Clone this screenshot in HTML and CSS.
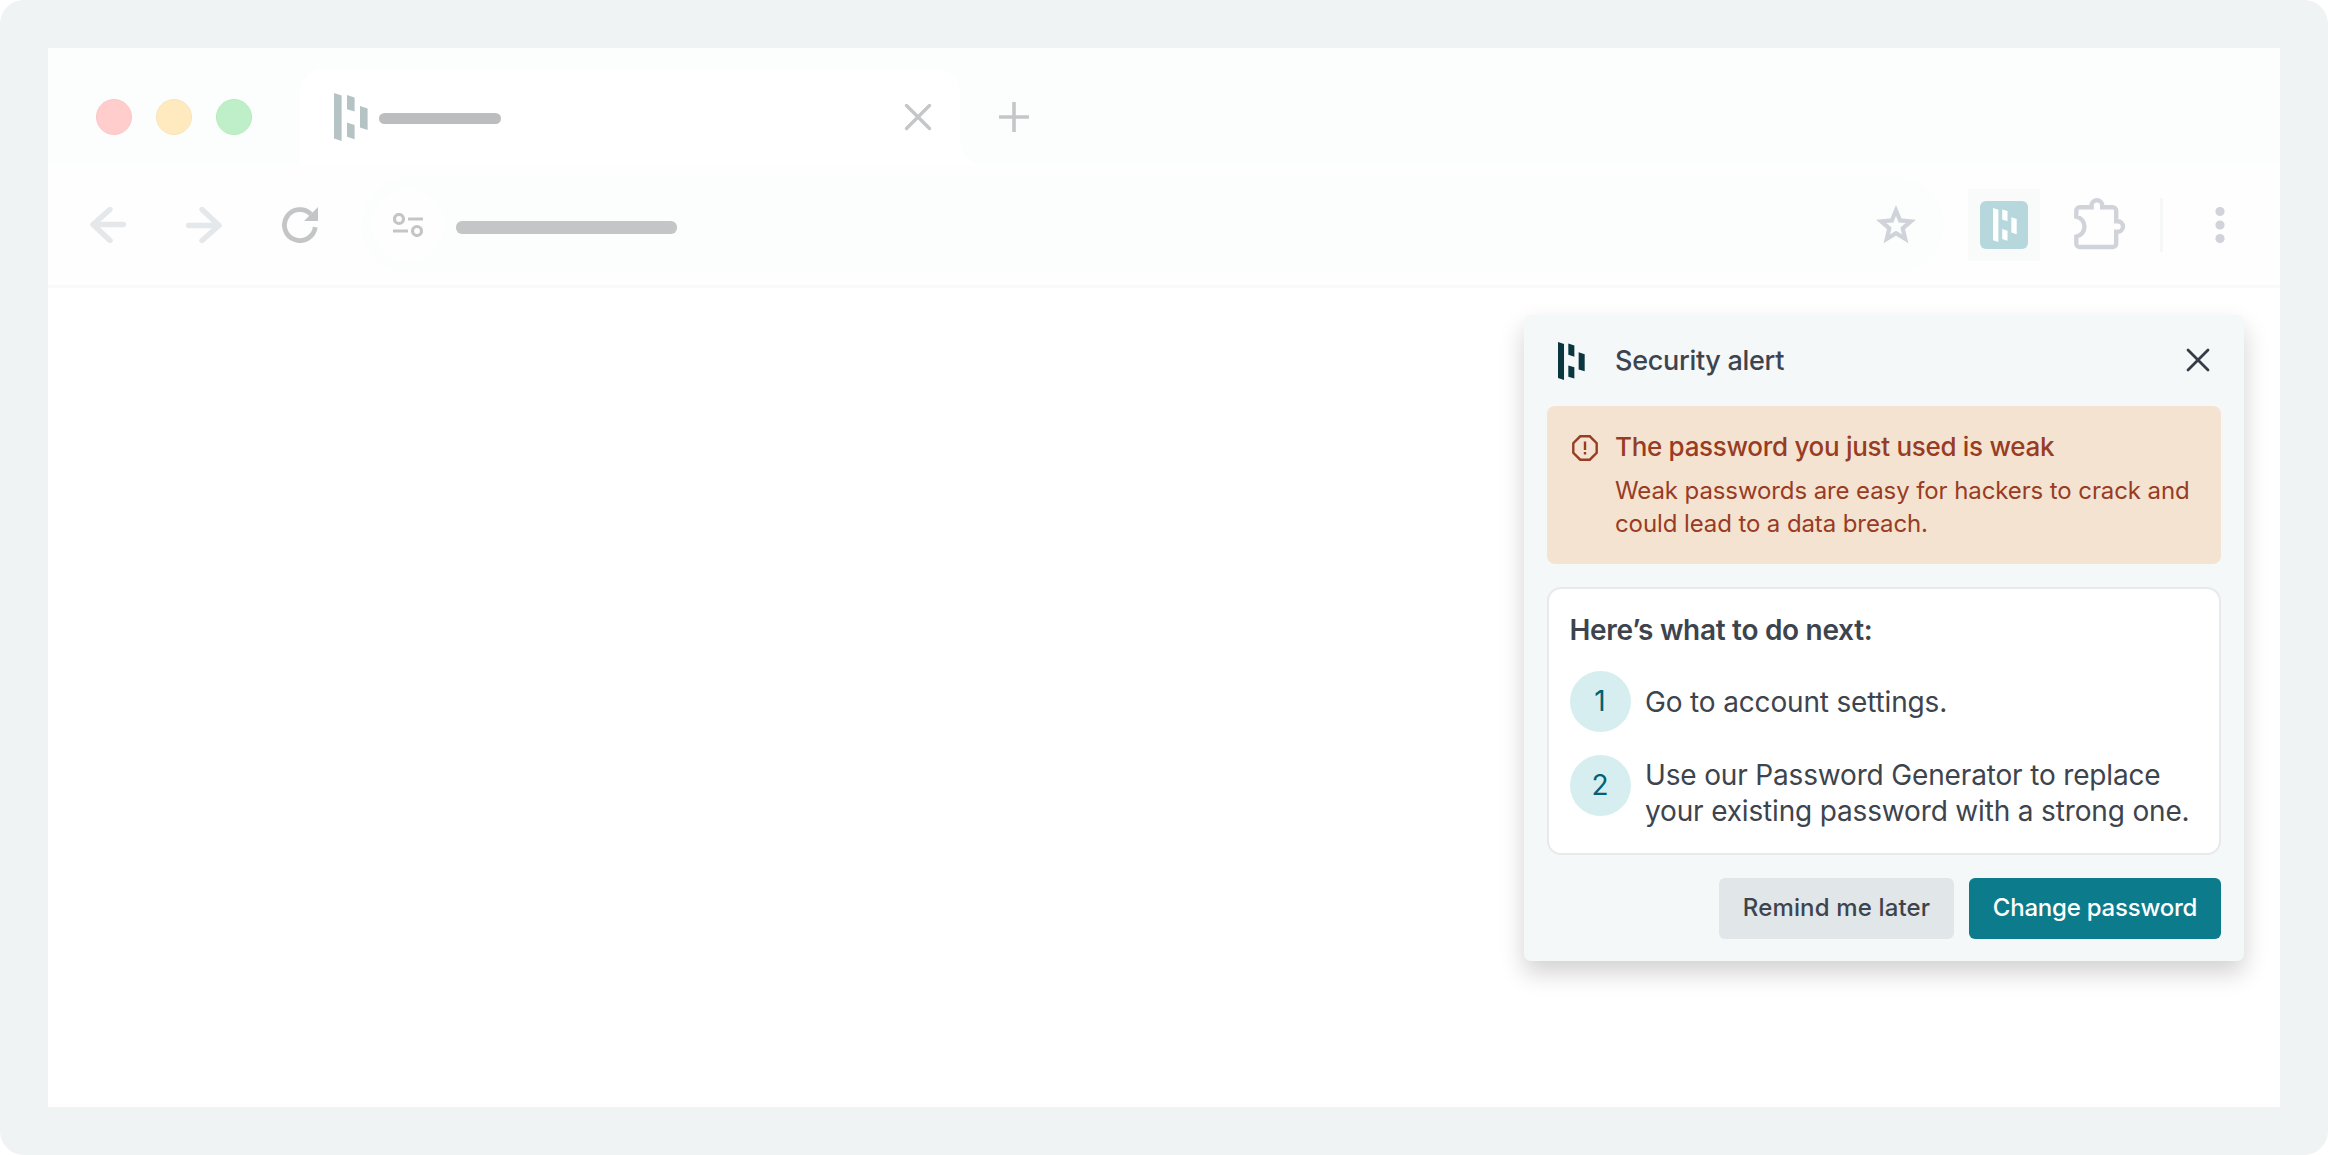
FILE: index.html
```html
<!DOCTYPE html>
<html lang="en">
<head>
<meta charset="utf-8">
<title>Security alert</title>
<link rel="stylesheet" href="styles.css">
</head>
<body>
<svg width="0" height="0" class="defs">
  <symbol id="logo" viewBox="0 0 34 48" preserveAspectRatio="none">
    <path d="M0 0L7.6 2.4V48L0 45.6ZM13 2L20.6 4.4V18.6L13 16.2ZM13 29.6L20.6 32V46.2L13 43.8ZM26 13L33.6 15.4V37L26 34.6Z"/>
  </symbol>
</svg>
<div class="frame">
  <div class="window">
    <div class="tabstrip">
      <div class="lights"><i class="light red"></i><i class="light yellow"></i><i class="light green"></i></div>
      <div class="tab">
        <svg class="tab-logo"><use href="#logo"/></svg>
        <span class="tab-title"></span>
        <svg class="tab-close" viewBox="0 0 28 28"><path d="M2.5 2.5L25.5 25.5M25.5 2.5L2.5 25.5"/></svg>
      </div>
      <svg class="tab-new" viewBox="0 0 30 30"><path d="M15 0V30M0 15H30"/></svg>
    </div>
    <div class="toolbar">
      <div class="nav">
        <svg class="arrow" viewBox="0 0 36 36"><path d="M33.5 17.5H3M20 2.5L3 17.5L20 33.5"/></svg>
        <svg class="arrow" viewBox="0 0 36 36"><path d="M2.5 18.5H33M16 2.5L33 18.5L16 33.5"/></svg>
        <svg class="reload" viewBox="0 0 36 36"><path d="M33.3 20.2A15.5 15.5 0 1 1 29 7.2" fill="none" stroke="#c4c5c7" stroke-width="4.8"/><path d="M36 0V14H22Z" fill="#c4c5c7"/></svg>
      </div>
      <div class="address">
        <div class="site-info">
          <svg class="tune" viewBox="0 0 30 24"><circle cx="6" cy="6" r="4.5"/><circle cx="24" cy="18" r="4.5"/><path d="M15 6H30M0 18H15"/></svg>
        </div>
        <span class="url"></span>
        <svg class="star" viewBox="0 0 40 40"><path d="M20 5.5L24.1 15.4L34.8 16.3L26.7 23.3L29.2 33.8L20 28.2L10.8 33.8L13.3 23.3L5.2 16.3L15.9 15.4Z"/></svg>
      </div>
      <div class="extension"><div class="tile"><svg class="tile-logo"><use href="#logo"/></svg></div></div>
      <svg class="puzzle" viewBox="0 0 52 52"><path d="M6 9.2H17.6V7.5A5.3 5.3 0 0 1 28.2 7.5V9.2H38.5A3.5 3.5 0 0 1 42.2 12.9V23.2H43.7A5.3 5.3 0 0 1 43.7 33.8H42.2V45.3A3.5 3.5 0 0 1 38.5 49H6A3.5 3.5 0 0 1 2.3 45.3V38.6A10.2 10.2 0 0 0 2.3 18.6V12.9A3.5 3.5 0 0 1 6 9.2Z"/></svg>
      <span class="divider"></span>
      <svg class="dots" viewBox="0 0 10 36"><circle cx="5" cy="4.5" r="4.6"/><circle cx="5" cy="18" r="4.6"/><circle cx="5" cy="31.5" r="4.6"/></svg>
    </div>
    <div class="page">
      <section class="popup">
        <header class="popup-header">
          <svg class="popup-logo"><use href="#logo"/></svg>
          <h1 class="popup-title">Security alert</h1>
          <svg class="popup-close" viewBox="0 0 24 24"><path d="M2 2L22 22M22 2L2 22"/></svg>
        </header>
        <div class="alert">
          <svg class="alert-icon" viewBox="0 0 26 26"><path d="M8.2 1.3H17.8L24.7 8.2V17.8L17.8 24.7H8.2L1.3 17.8V8.2Z" fill="none" stroke="#983c24" stroke-width="2.4"/><path d="M11.8 6.5H14.2V15H11.8ZM11.8 17H14.2V19.5H11.8Z" fill="#983c24"/></svg>
          <div>
            <h2 class="alert-title">The password you just used is weak</h2>
            <p class="alert-text">Weak passwords are easy for hackers to crack and<br>could lead to a data breach.</p>
          </div>
        </div>
        <div class="card">
          <h2 class="card-title">Here’s what to do next:</h2>
          <div class="step"><b class="num">1</b><p class="step-text">Go to account settings.</p></div>
          <div class="step"><b class="num">2</b><p class="step-text">Use our Password Generator to replace<br>your existing password with a strong one.</p></div>
        </div>
        <div class="actions">
          <button class="btn later">Remind me later</button>
          <button class="btn change">Change password</button>
        </div>
      </section>
    </div>
  </div>
</div>
</body>
</html>
```
FILE: styles.css
```css
* { box-sizing: border-box; }
body { margin: 0; background: #fff; font-family: Inter, "Liberation Sans", sans-serif; color: #3d444d; }
h1, h2, p { margin: 0; font-weight: 400; white-space: nowrap; }
svg { display: block; flex: none; }
.defs { position: absolute; }
.frame { width: 2328px; height: 1155px; padding: 48px; border-radius: 24px; background: #eff3f4; }
.window { height: 1059px; background: #fff; display: flex; flex-direction: column; }

.tabstrip { height: 117px; background: #fcfefd; display: flex; padding: 21px 0 0 48px; }
.lights { display: flex; gap: 24px; padding-top: 30px; width: 204px; }
.light { width: 36px; height: 36px; border-radius: 50%; border: 1.5px solid; }
.red { background: #ffcdcc; border-color: #fac7c6; }
.yellow { background: #ffeabf; border-color: #f8e4ba; }
.green { background: #bfefc8; border-color: #b8e9c0; }
.tab { position: relative; width: 660px; height: 96px; background: #fff; border-radius: 24px 24px 0 0; display: flex; align-items: center; padding: 0 28px 0 33.5px; }
.tab::after { content: ""; position: absolute; left: 100%; bottom: 0; width: 24px; height: 24px; background: radial-gradient(circle at 100% 0, transparent 23.5px, #fff 24px); }
.tab-logo { width: 34px; height: 48px; fill: #b5c3c4; }
.tab-title { width: 122px; height: 10.5px; border-radius: 6px; background: #bcbdbf; margin: 3px auto 0 11.5px; }
.tab-close { width: 28px; height: 28px; fill: none; stroke: #c5c6c8; stroke-width: 3.4; stroke-linecap: round; }
.tab-new { width: 30px; height: 30px; margin: 33px 0 0 39px; fill: none; stroke: #c5c6c8; stroke-width: 3.6; }

.toolbar { height: 123px; background: #fefefe; border-bottom: 3px solid #f8f9f9; display: flex; align-items: center; padding-left: 42px; }
.nav { display: flex; gap: 60px; width: 271px; }
.arrow { width: 36px; height: 36px; fill: none; stroke: #e4e8eb; stroke-width: 5.4; stroke-linecap: round; stroke-linejoin: round; }
.reload { width: 36px; height: 36px; }
.address { width: 1583px; height: 96px; border-radius: 48px; background: #fbfefd; display: flex; align-items: center; padding: 0 28px 0 11px; }
.site-info { width: 72px; height: 72px; border-radius: 50%; background: #fefefe; display: flex; align-items: center; justify-content: center; }
.tune { width: 30px; height: 24px; fill: none; stroke: #c4c5c7; stroke-width: 3.2; }
.url { width: 221px; height: 12.5px; border-radius: 6px; background: #c4c5c7; margin: 5px auto 0 12px; }
.star { width: 40px; height: 40px; fill: none; stroke: #d0d4da; stroke-width: 4.2; }
.extension { width: 72px; height: 72px; margin-left: 24px; background: #f9fbfb; display: flex; align-items: center; justify-content: center; }
.tile { width: 48px; height: 48px; border-radius: 6px; background: #b6d8dc; display: flex; align-items: center; padding-left: 13px; }
.tile-logo { width: 24px; height: 34px; fill: #fff; }
.puzzle { width: 52px; height: 52px; margin: -2px 0 0 34px; fill: none; stroke: #d0d4da; stroke-width: 4.4; }
.divider { width: 3px; height: 54px; margin-left: 34px; background: #f6f7f7; }
.dots { width: 10px; height: 36px; margin-left: 52px; fill: #d0d4da; }

.page { flex: 1; display: flex; justify-content: flex-end; align-items: flex-start; padding: 27px 36px 0 0; }
.popup { width: 720px; height: 646px; border-radius: 7px; background: #f5f8f9; padding: 0 23px; box-shadow: 0 12px 24px rgba(0, 0, 0, .18); }
.popup-header { height: 91px; display: flex; align-items: center; padding: 0 11px; }
.popup-logo { width: 27px; height: 38px; fill: #09363f; }
.popup-title { font-size: 27px; font-weight: 500; line-height: 36px; letter-spacing: -.3px; margin: 0 auto 0 30px; }
.popup-close { width: 24px; height: 24px; margin-top: -1px; fill: none; stroke: #343c46; stroke-width: 2.8; stroke-linecap: round; }
.alert { height: 158px; border-radius: 8px; background: #f4e3d1; color: #983c24; display: flex; gap: 17px; padding: 22px 0 0 25px; }
.alert-icon { width: 26px; height: 26px; margin-top: 7px; }
.alert-title { font-size: 26px; font-weight: 500; line-height: 38px; letter-spacing: -.3px; }
.alert-text { font-size: 24px; line-height: 33px; letter-spacing: -.1px; margin-top: 8px; }
.card { height: 268px; margin-top: 23px; border: 2px solid #e8e9ea; border-radius: 14px; background: #fff; padding: 20px 0 0 20.5px; }
.card-title { font-size: 28px; font-weight: 600; line-height: 42px; letter-spacing: -.3px; }
.step { display: flex; gap: 14.5px; margin-top: 20px; }
.step + .step { margin-top: 23px; }
.num { width: 61px; height: 61px; border-radius: 50%; background: #d6eef0; color: #026273; font-size: 28px; font-weight: 400; line-height: 61px; text-align: center; }
.step-text { font-size: 28px; line-height: 36px; letter-spacing: -.16px; padding-top: 13px; }
.step + .step .step-text { padding-top: 2px; }
.actions { display: flex; justify-content: flex-end; gap: 15px; margin-top: 23px; }
.btn { height: 61px; border: 0; border-radius: 6px; padding: 0 0 2px; font: 500 24px/59px Inter, sans-serif; text-align: center; white-space: nowrap; }
.later { width: 235px; background: #e1e6e9; color: #3d444d; letter-spacing: .15px; }
.change { width: 252px; background: #0c7c8c; color: #fff; letter-spacing: -.22px; }
```
